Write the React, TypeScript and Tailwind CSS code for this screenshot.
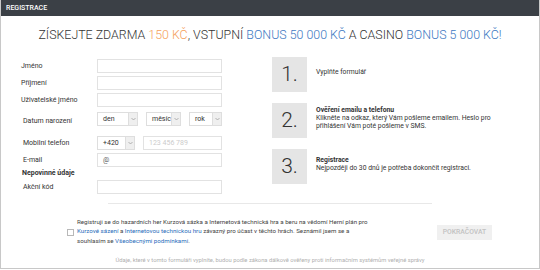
import type { ReactNode } from 'react';

const Chevron = () => (
  <svg width="5" height="4" viewBox="0 0 5 4" fill="none">
    <path d="M0.5 1 L2.5 3 L4.5 1" stroke="#9a9a9a" strokeWidth="0.7" />
  </svg>
);

interface SelectBoxProps {
  label: string;
  width: string;
}

const SelectBox = ({ label, width }: SelectBoxProps) => (
  <div className={`flex h-[14px] ${width} border border-[#dedede] bg-white`}>
    <span className="flex-1 pl-[5px] text-[7px] leading-[12px] text-[#333]">{label}</span>
    <span className="flex w-[9px] items-center justify-center border-l border-[#dedede] bg-[#efefef]">
      <Chevron />
    </span>
  </div>
);

const FieldRow = ({ label, children, className = '' }: { label: string; children: ReactNode; className?: string }) => (
  <div className={`flex h-[14px] items-center ${className}`}>
    <span className="w-[76px] text-[7px] text-[#333]">{label}</span>
    {children}
  </div>
);

const TextInput = ({ value, placeholder, width = 'w-[125px]' }: { value?: string; placeholder?: string; width?: string }) => (
  <div className={`h-[14px] ${width} border border-[#e2e2e2] bg-white pl-[5px] text-[7px] leading-[12px]`}>
    {value ? <span className="text-[#555]">{value}</span> : <span className="text-[#cccccc]">{placeholder}</span>}
  </div>
);

const Step = ({ num, children, className = '' }: { num: string; children: ReactNode; className?: string }) => (
  <div className={`flex items-center ${className}`}>
    <div className="flex h-[35px] w-[35px] shrink-0 items-center justify-center bg-[#e5e5e5] text-[21px] font-light text-[#333]">
      {num}
    </div>
    <div className="ml-[9px] w-[195px] pb-[5px] text-[6.8px] leading-[8.3px] text-[#333]">{children}</div>
  </div>
);

export default function App() {
  return (
    <div className="h-[270px] w-[540px] bg-white" style={{ fontFamily: 'Roboto, "Liberation Sans", sans-serif' }}>
      <div className="h-[269px] border border-t-0 border-[#c8c8c8]">
        <div className="h-4 bg-[#3b4046] pl-[5px] text-[7px] font-medium leading-4 text-white">REGISTRACE</div>

        <h1 className="pt-[12px] text-center text-[12.4px] font-light leading-[14px] text-[#333]">
          ZÍSKEJTE ZDARMA <span className="text-[#f5a05c]">150 KČ</span>, VSTUPNÍ{' '}
          <span className="text-[#3d78c2]">BONUS 50 000 KČ</span> A CASINO{' '}
          <span className="text-[#3d78c2]">BONUS 5 000 KČ!</span>
        </h1>

        <div className="mt-[15px] flex">
          <div className="w-[221px] pl-[20px] pt-[2px]">
            <FieldRow label="Jméno">
              <TextInput />
            </FieldRow>
            <FieldRow label="Příjmení" className="mt-[3px]">
              <TextInput />
            </FieldRow>
            <FieldRow label="Uživatelské jméno" className="mt-[3px]">
              <TextInput />
            </FieldRow>
            <div className="mt-[5px] flex h-[14px]">
              <span className="w-[76px] pl-[2px] pt-[5px] text-[7px] leading-[8px] text-[#333]">Datum narození</span>
              <div className="flex gap-[8px]">
                <SelectBox label="den" width="w-[41px]" />
                <SelectBox label="měsíc" width="w-[35px]" />
                <SelectBox label="rok" width="w-[33px]" />
              </div>
            </div>
            <FieldRow label="Mobilní telefon" className="mt-[10px] pl-[2px]">
              <div className="-ml-[2px] flex gap-[8px]">
                <SelectBox label="+420" width="w-[38px]" />
                <TextInput placeholder="123 456 789" width="w-[79px]" />
              </div>
            </FieldRow>
            <FieldRow label="E-mail" className="mt-[3px] pl-[2px]">
              <div className="-ml-[2px]">
                <TextInput value="@" />
              </div>
            </FieldRow>
            <div className="h-[13px] pl-[1px] text-[7px] font-bold leading-[13px] text-[#333]">Nepovinné údaje</div>
            <FieldRow label="Akční kód" className="pl-[2px]">
              <div className="-ml-[2px]">
                <TextInput />
              </div>
            </FieldRow>
          </div>

          <div className="ml-[50px]">
            <Step num="1.">Vyplňte formulář</Step>
            <Step num="2." className="mt-[11px]">
              <div className="font-bold">Ověření emailu a telefonu</div>
              <div>Klikněte na odkaz, který Vám pošleme emailem. Heslo pro přihlášení Vám poté pošleme v SMS.</div>
            </Step>
            <Step num="3." className="mt-[11px]">
              <div className="font-bold">Registrace</div>
              <div>Nejpozději do 30 dnů je potřeba dokončit registraci.</div>
            </Step>
          </div>
        </div>

        <div className="mx-auto mt-[9px] h-px w-[324px] bg-[#e8e8e8]" />

        <div className="mt-[14px] flex items-center pl-[66px] pr-[47px]">
          <span className="h-[7px] w-[7px] shrink-0 border border-[#b8b8b8] bg-white" />
          <p className="ml-[3px] whitespace-nowrap text-[6.2px] leading-[9.4px] text-[#444]">
            Registruji se do hazardních her Kurzová sázka a Internetová technická hra a beru na vědomí Herní plán pro
            <br />
            <a className="text-[#2a6ebb]">Kurzové sázení</a> a <a className="text-[#2a6ebb]">Internetovou technickou hru</a>{' '}
            závazný pro účast v těchto hrách. Seznámil jsem se a
            <br />
            souhlasím se <a className="text-[#2a6ebb]">Všeobecnými podmínkami</a>.
          </p>
          <button className="ml-auto h-[15px] w-[55px] bg-[#f0f0f0] text-[6.8px] font-medium text-[#c2c2c2]">
            POKRAČOVAT
          </button>
        </div>

        <p className="mt-[10px] text-center text-[5.8px] text-[#b0b0b0]">
          Údaje, které v tomto formuláři vyplníte, budou podle zákona dálkově ověřeny proti informačním systémům veřejné správy
        </p>
      </div>
    </div>
  );
}
